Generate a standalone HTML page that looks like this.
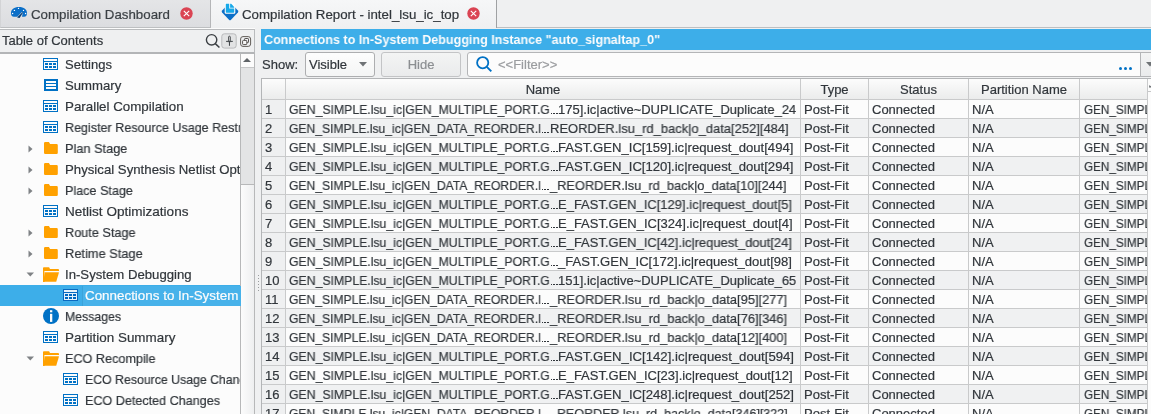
<!DOCTYPE html>
<html><head><meta charset="utf-8">
<style>
html,body{margin:0;padding:0;}
body{width:1151px;height:414px;overflow:hidden;position:relative;background:#eff0f1;font-family:"Liberation Sans",sans-serif;font-size:13px;color:#31363b;}
.a{position:absolute;}
.t{position:absolute;white-space:nowrap;line-height:15px;will-change:transform;-webkit-text-stroke-width:0.2px;}
</style></head><body>

<div class="a" style="left:0;top:0;width:1151px;height:27px;background:#eff0f1;border-bottom:1px solid #bdbfc1"></div>
<div class="a" style="left:0;top:0;width:209px;height:27px;background:linear-gradient(#e4e5e7,#dcdde0);border-left:1px solid #d3d4d6;border-right:1px solid #b5b6b8;border-bottom:1px solid #bdbfc1"></div>
<div class="a" style="left:211px;top:0;width:285px;height:28px;background:linear-gradient(#f6f7f8,#eff0f1);border-right:1px solid #9fa1a3"></div>
<svg class="a" style="left:9px;top:5px" width="20" height="14" viewBox="9 5 20 14">
<path d="M11 13.6 C10.6 9.2 14.2 6.9 19 6.9 C23.8 6.9 27.4 9.2 27 13.6 Q26.7 16.8 24.2 16.8 L22 16.8 L22.8 12.6 L21.6 12.2 L17.3 16.8 L13.8 16.8 Q11.3 16.8 11 13.6 Z" fill="#0b6fc8"/>
<path d="M17.1 17.4 L22.3 12.3 L22.9 12.7 L19.6 17.9 Z" fill="#063d75"/>
<circle cx="12.6" cy="13.5" r="0.7" fill="#fff"/><circle cx="14.4" cy="10.4" r="0.7" fill="#fff"/>
<circle cx="18.5" cy="8.4" r="0.7" fill="#fff"/><circle cx="23.5" cy="10.4" r="0.7" fill="#fff"/><circle cx="25.6" cy="13.5" r="0.7" fill="#fff"/>
</svg>
<div class="t" style="left:31.3px;top:7px;color:#3b4045;transform:scaleX(1.022);transform-origin:0 0">Compilation Dashboard</div>
<svg class="a" style="left:180.3px;top:7.300000000000001px" width="13" height="13" viewBox="0 0 13 13"><circle cx="6.5" cy="6.5" r="6.2" fill="#da4453"/><path d="M3.8 3.8 L9.2 9.2 M9.2 3.8 L3.8 9.2" stroke="#fff" stroke-width="1.1"/></svg>
<svg class="a" style="left:218px;top:2px" width="24" height="20" viewBox="218 2 24 20">
<path d="M230 20.3 Q229.6 20.3 229.2 19.9 L222.1 12.4 Q221.3 11.5 222.1 10.6 L225 7.6 L235 7.6 L237.9 10.6 Q238.7 11.5 237.9 12.4 L230.8 19.9 Q230.4 20.3 230 20.3 Z" fill="#0b6fc8"/>
<rect x="224.7" y="2.8" width="10.6" height="11" rx="1.2" fill="#fbfbfc"/>
<path d="M225.8 4.2 Q225.8 3.8 226.2 3.8 L229.2 3.8 L229.2 8.6 L234.2 8.6 L234.2 12.1 Q234.2 12.7 233.6 12.7 L226.4 12.7 Q225.8 12.7 225.8 12.1 Z" fill="#17a9e9"/>
<path d="M230.1 3.8 L231.2 3.8 L234.2 6.9 L234.2 7.7 L230.1 7.7 Z" fill="#17a9e9"/>
</svg>
<div class="t" style="left:242px;top:7px;color:#31363b;transform:scaleX(1.022);transform-origin:0 0">Compilation Report - intel_lsu_ic_top</div>
<svg class="a" style="left:467.2px;top:6.5px" width="13" height="13" viewBox="0 0 13 13"><circle cx="6.5" cy="6.5" r="6.2" fill="#da4453"/><path d="M3.8 3.8 L9.2 9.2 M9.2 3.8 L3.8 9.2" stroke="#fff" stroke-width="1.1"/></svg>
<div class="a" style="left:0;top:28px;width:255px;height:1px;background:#fcfcfc"></div>
<div class="a" style="left:0;top:29px;width:254px;height:22px;background:#eff0f1;border-top:1px solid #b9bbbd;border-right:1px solid #b9bbbd;border-bottom:2px solid #b3b5b7"></div>
<div class="t" style="left:2px;top:33px">Table of Contents</div>
<svg class="a" style="left:205px;top:33px" width="16" height="16" viewBox="0 0 16 16"><circle cx="6.6" cy="6.8" r="5.2" fill="none" stroke="#3b3f43" stroke-width="1.4"/><path d="M10.3 10.6 L14.4 14.5" stroke="#3b3f43" stroke-width="1.5"/></svg>
<svg class="a" style="left:220px;top:32px" width="34" height="18" viewBox="220 32 34 18">
<rect x="221.8" y="33.8" width="14.4" height="14.3" rx="2.6" fill="#e2e3e4" stroke="#b9babc" stroke-width="1"/>
<path d="M228.6 40.9 L228.6 36.9 Q228.6 36.2 229.45 36.2 Q230.3 36.2 230.3 36.9 L230.3 40.9" fill="none" stroke="#3b3f43" stroke-width="0.9"/>
<path d="M226.1 41.4 Q229.45 40.6 232.8 41.4 Q229.45 42.2 226.1 41.4 Z" fill="#3b3f43" stroke="#3b3f43" stroke-width="0.6"/>
<path d="M229.45 41.4 L229.45 45.8" stroke="#3b3f43" stroke-width="1"/>
<rect x="240.6" y="36.6" width="10" height="9.8" rx="2.4" fill="none" stroke="#625d59" stroke-width="1"/>
<path d="M244.5 39.9 L244.5 39.2 Q244.5 38.5 245.2 38.5 L247.8 38.5 Q248.5 38.5 248.5 39.2 L248.5 41.9 Q248.5 42.6 247.8 42.6 L247 42.6" fill="none" stroke="#4c4846" stroke-width="0.95"/>
<rect x="242.6" y="40.4" width="4.2" height="4.2" rx="0.8" fill="#f8f8f8" stroke="#4c4846" stroke-width="0.95"/>
</svg>
<div class="a" style="left:0;top:54px;width:240px;height:360px;background:#fcfcfc"></div>
<div class="a" style="left:240px;top:54px;width:13px;height:360px;background:#e3e4e5;border-left:1px solid #b7b8b9;border-right:1px solid #b7b8b9"></div>
<div class="a" style="left:241px;top:54px;width:13px;height:13px;background:#fcfcfc;border-bottom:1px solid #c6c7c8"></div>
<svg class="a" style="left:242px;top:57px" width="10" height="6" viewBox="0 0 10 6"><path d="M1 5 L5 1 L9 5 Z" fill="#606468"/></svg>
<div class="a" style="left:241px;top:184px;width:13px;height:230px;background:linear-gradient(90deg,#fcfcfc,#eeeff0);border-top:1px solid #b7b8b9"></div>
<div class="a" style="left:258px;top:275px;width:1px;height:1px;background:#9a9c9e"></div>
<div class="a" style="left:258px;top:278px;width:1px;height:1px;background:#9a9c9e"></div>
<div class="a" style="left:258px;top:281px;width:1px;height:1px;background:#9a9c9e"></div>
<div class="a" style="left:258px;top:284px;width:1px;height:1px;background:#9a9c9e"></div>
<div class="a" style="left:258px;top:287px;width:1px;height:1px;background:#9a9c9e"></div>
<div class="a" style="left:258px;top:290px;width:1px;height:1px;background:#9a9c9e"></div>
<svg style="position:absolute;left:43px;top:58px" width="15" height="12" viewBox="0 0 15 12"><rect x="0.5" y="0.5" width="14" height="11" fill="none" stroke="#0071c5" stroke-width="1"/><rect x="1" y="3" width="13" height="1" fill="#0071c5"/><rect x="2" y="5" width="3" height="2" fill="#0071c5"/><rect x="6" y="5" width="3" height="2" fill="#0071c5"/><rect x="10" y="5" width="3" height="2" fill="#0071c5"/><rect x="2" y="8" width="3" height="2" fill="#0071c5"/><rect x="6" y="8" width="3" height="2" fill="#0071c5"/><rect x="10" y="8" width="3" height="2" fill="#0071c5"/></svg>
<div class="a" style="left:65px;top:54px;width:175px;height:21px;overflow:hidden"><div class="t" style="left:0;top:3px;color:#31363b;transform:scaleX(1.0);transform-origin:0 0">Settings</div></div>
<svg style="position:absolute;left:44px;top:79px" width="14" height="12" viewBox="0 0 14 12"><rect x="0" y="0" width="14" height="12" fill="#0071c5"/><rect x="2" y="2" width="10" height="2" fill="#fcfcfc"/><rect x="2" y="5" width="10" height="2" fill="#fcfcfc"/><rect x="2" y="8" width="10" height="2" fill="#fcfcfc"/></svg>
<div class="a" style="left:65px;top:75px;width:175px;height:21px;overflow:hidden"><div class="t" style="left:0;top:3px;color:#31363b;transform:scaleX(1.011);transform-origin:0 0">Summary</div></div>
<svg style="position:absolute;left:43px;top:100px" width="15" height="12" viewBox="0 0 15 12"><rect x="0.5" y="0.5" width="14" height="11" fill="none" stroke="#0071c5" stroke-width="1"/><rect x="1" y="3" width="13" height="1" fill="#0071c5"/><rect x="2" y="5" width="3" height="2" fill="#0071c5"/><rect x="6" y="5" width="3" height="2" fill="#0071c5"/><rect x="10" y="5" width="3" height="2" fill="#0071c5"/><rect x="2" y="8" width="3" height="2" fill="#0071c5"/><rect x="6" y="8" width="3" height="2" fill="#0071c5"/><rect x="10" y="8" width="3" height="2" fill="#0071c5"/></svg>
<div class="a" style="left:65px;top:96px;width:175px;height:21px;overflow:hidden"><div class="t" style="left:0;top:3px;color:#31363b;transform:scaleX(1.026);transform-origin:0 0">Parallel Compilation</div></div>
<svg style="position:absolute;left:43px;top:121px" width="15" height="12" viewBox="0 0 15 12"><rect x="0.5" y="0.5" width="14" height="11" fill="none" stroke="#0071c5" stroke-width="1"/><rect x="1" y="3" width="13" height="1" fill="#0071c5"/><rect x="2" y="5" width="3" height="2" fill="#0071c5"/><rect x="6" y="5" width="3" height="2" fill="#0071c5"/><rect x="10" y="5" width="3" height="2" fill="#0071c5"/><rect x="2" y="8" width="3" height="2" fill="#0071c5"/><rect x="6" y="8" width="3" height="2" fill="#0071c5"/><rect x="10" y="8" width="3" height="2" fill="#0071c5"/></svg>
<div class="a" style="left:65px;top:117px;width:175px;height:21px;overflow:hidden"><div class="t" style="left:0;top:3px;color:#31363b;transform:scaleX(0.965);transform-origin:0 0">Register Resource Usage Restrictions</div></div>
<svg style="position:absolute;left:28px;top:145px" width="6" height="8" viewBox="0 0 6 8"><path d="M0.5 0.5 L4.5 4 L0.5 7.5 Z" fill="#7f8285"/></svg>
<svg style="position:absolute;left:43px;top:142px" width="16" height="13" viewBox="0 0 16 13"><path d="M1 1.3 Q1 0 2.3 0 L5.9 0 L7.1 2.1 L13.6 2.1 Q14.8 2.1 14.8 3.3 L14.8 10.8 Q14.8 12 13.6 12 L2.2 12 Q1 12 1 10.8 Z" fill="#ffa100"/></svg>
<div class="a" style="left:65px;top:138px;width:175px;height:21px;overflow:hidden"><div class="t" style="left:0;top:3px;color:#31363b;transform:scaleX(0.98);transform-origin:0 0">Plan Stage</div></div>
<svg style="position:absolute;left:28px;top:166px" width="6" height="8" viewBox="0 0 6 8"><path d="M0.5 0.5 L4.5 4 L0.5 7.5 Z" fill="#7f8285"/></svg>
<svg style="position:absolute;left:43px;top:163px" width="16" height="13" viewBox="0 0 16 13"><path d="M1 1.3 Q1 0 2.3 0 L5.9 0 L7.1 2.1 L13.6 2.1 Q14.8 2.1 14.8 3.3 L14.8 10.8 Q14.8 12 13.6 12 L2.2 12 Q1 12 1 10.8 Z" fill="#ffa100"/></svg>
<div class="a" style="left:65px;top:159px;width:175px;height:21px;overflow:hidden"><div class="t" style="left:0;top:3px;color:#31363b;transform:scaleX(1.016);transform-origin:0 0">Physical Synthesis Netlist Optimizations</div></div>
<svg style="position:absolute;left:28px;top:187px" width="6" height="8" viewBox="0 0 6 8"><path d="M0.5 0.5 L4.5 4 L0.5 7.5 Z" fill="#7f8285"/></svg>
<svg style="position:absolute;left:43px;top:184px" width="16" height="13" viewBox="0 0 16 13"><path d="M1 1.3 Q1 0 2.3 0 L5.9 0 L7.1 2.1 L13.6 2.1 Q14.8 2.1 14.8 3.3 L14.8 10.8 Q14.8 12 13.6 12 L2.2 12 Q1 12 1 10.8 Z" fill="#ffa100"/></svg>
<div class="a" style="left:65px;top:180px;width:175px;height:21px;overflow:hidden"><div class="t" style="left:0;top:3px;color:#31363b;transform:scaleX(0.969);transform-origin:0 0">Place Stage</div></div>
<svg style="position:absolute;left:43px;top:205px" width="15" height="12" viewBox="0 0 15 12"><rect x="0.5" y="0.5" width="14" height="11" fill="none" stroke="#0071c5" stroke-width="1"/><rect x="1" y="3" width="13" height="1" fill="#0071c5"/><rect x="2" y="5" width="3" height="2" fill="#0071c5"/><rect x="6" y="5" width="3" height="2" fill="#0071c5"/><rect x="10" y="5" width="3" height="2" fill="#0071c5"/><rect x="2" y="8" width="3" height="2" fill="#0071c5"/><rect x="6" y="8" width="3" height="2" fill="#0071c5"/><rect x="10" y="8" width="3" height="2" fill="#0071c5"/></svg>
<div class="a" style="left:65px;top:201px;width:175px;height:21px;overflow:hidden"><div class="t" style="left:0;top:3px;color:#31363b;transform:scaleX(1.042);transform-origin:0 0">Netlist Optimizations</div></div>
<svg style="position:absolute;left:28px;top:229px" width="6" height="8" viewBox="0 0 6 8"><path d="M0.5 0.5 L4.5 4 L0.5 7.5 Z" fill="#7f8285"/></svg>
<svg style="position:absolute;left:43px;top:226px" width="16" height="13" viewBox="0 0 16 13"><path d="M1 1.3 Q1 0 2.3 0 L5.9 0 L7.1 2.1 L13.6 2.1 Q14.8 2.1 14.8 3.3 L14.8 10.8 Q14.8 12 13.6 12 L2.2 12 Q1 12 1 10.8 Z" fill="#ffa100"/></svg>
<div class="a" style="left:65px;top:222px;width:175px;height:21px;overflow:hidden"><div class="t" style="left:0;top:3px;color:#31363b;transform:scaleX(0.977);transform-origin:0 0">Route Stage</div></div>
<svg style="position:absolute;left:28px;top:250px" width="6" height="8" viewBox="0 0 6 8"><path d="M0.5 0.5 L4.5 4 L0.5 7.5 Z" fill="#7f8285"/></svg>
<svg style="position:absolute;left:43px;top:247px" width="16" height="13" viewBox="0 0 16 13"><path d="M1 1.3 Q1 0 2.3 0 L5.9 0 L7.1 2.1 L13.6 2.1 Q14.8 2.1 14.8 3.3 L14.8 10.8 Q14.8 12 13.6 12 L2.2 12 Q1 12 1 10.8 Z" fill="#ffa100"/></svg>
<div class="a" style="left:65px;top:243px;width:175px;height:21px;overflow:hidden"><div class="t" style="left:0;top:3px;color:#31363b;transform:scaleX(0.988);transform-origin:0 0">Retime Stage</div></div>
<svg style="position:absolute;left:26px;top:272px" width="9" height="6" viewBox="0 0 9 6"><path d="M0.5 0.5 L8 0.5 L4.25 4.5 Z" fill="#7f8285"/></svg>
<svg style="position:absolute;left:43px;top:267px" width="17" height="16" viewBox="0 0 17 16"><path d="M0 1.1 Q0 0.2 0.9 0.2 L6.1 0.2 L7 2 L15 2 Q16 2 16 3 L16 4 L1.6 4 L1.6 15 L0 15 Z" fill="#ffa100"/><rect x="1.6" y="4" width="14.4" height="1.1" fill="#fcfcfc"/><path d="M2.1 5.2 L15.5 5.2 Q16 5.2 15.9 5.7 L13.2 14.8 L0.4 14.8 Q0 14.8 0.1 14.3 Z" fill="#ffa100"/></svg>
<div class="a" style="left:65px;top:264px;width:175px;height:21px;overflow:hidden"><div class="t" style="left:0;top:3px;color:#31363b;transform:scaleX(1.013);transform-origin:0 0">In-System Debugging</div></div>
<div class="a" style="left:0;top:285px;width:240px;height:21px;background:#3daee9"></div>
<div class="a" style="left:82px;top:286px;width:158px;height:20px;background:#47b2ea;border-left:1px solid #3aa3da"></div>
<svg style="position:absolute;left:63px;top:289px" width="15" height="12" viewBox="0 0 15 12"><rect x="0" y="0" width="15" height="12" fill="#0a6ac0"/><rect x="1" y="1" width="13" height="10" fill="#e6f3fb"/><rect x="1" y="3" width="13" height="1" fill="#0a6ac0"/><rect x="2" y="5" width="3" height="2" fill="#0068c0"/><rect x="6" y="5" width="3" height="2" fill="#0068c0"/><rect x="10" y="5" width="3" height="2" fill="#0068c0"/><rect x="2" y="8" width="3" height="2" fill="#0068c0"/><rect x="6" y="8" width="3" height="2" fill="#0068c0"/><rect x="10" y="8" width="3" height="2" fill="#0068c0"/></svg>
<div class="a" style="left:85px;top:285px;width:155px;height:21px;overflow:hidden"><div class="t" style="left:0;top:3px;color:#fcfcfc;transform:scaleX(1.03);transform-origin:0 0">Connections to In-System Debugging Instance</div></div>
<svg style="position:absolute;left:43px;top:308px" width="16" height="16" viewBox="0 0 16 16"><circle cx="8" cy="8" r="8" fill="#0071c5"/><rect x="7" y="2.2" width="2.3" height="2.1" fill="#fcfcfc"/><rect x="7" y="5.8" width="2.3" height="8.1" fill="#fcfcfc"/></svg>
<div class="a" style="left:65px;top:306px;width:175px;height:21px;overflow:hidden"><div class="t" style="left:0;top:3px;color:#31363b;transform:scaleX(0.946);transform-origin:0 0">Messages</div></div>
<svg style="position:absolute;left:43px;top:331px" width="15" height="12" viewBox="0 0 15 12"><rect x="0.5" y="0.5" width="14" height="11" fill="none" stroke="#0071c5" stroke-width="1"/><rect x="1" y="3" width="13" height="1" fill="#0071c5"/><rect x="2" y="5" width="3" height="2" fill="#0071c5"/><rect x="6" y="5" width="3" height="2" fill="#0071c5"/><rect x="10" y="5" width="3" height="2" fill="#0071c5"/><rect x="2" y="8" width="3" height="2" fill="#0071c5"/><rect x="6" y="8" width="3" height="2" fill="#0071c5"/><rect x="10" y="8" width="3" height="2" fill="#0071c5"/></svg>
<div class="a" style="left:65px;top:327px;width:175px;height:21px;overflow:hidden"><div class="t" style="left:0;top:3px;color:#31363b;transform:scaleX(1.032);transform-origin:0 0">Partition Summary</div></div>
<svg style="position:absolute;left:26px;top:356px" width="9" height="6" viewBox="0 0 9 6"><path d="M0.5 0.5 L8 0.5 L4.25 4.5 Z" fill="#7f8285"/></svg>
<svg style="position:absolute;left:43px;top:351px" width="17" height="16" viewBox="0 0 17 16"><path d="M0 1.1 Q0 0.2 0.9 0.2 L6.1 0.2 L7 2 L15 2 Q16 2 16 3 L16 4 L1.6 4 L1.6 15 L0 15 Z" fill="#ffa100"/><rect x="1.6" y="4" width="14.4" height="1.1" fill="#fcfcfc"/><path d="M2.1 5.2 L15.5 5.2 Q16 5.2 15.9 5.7 L13.2 14.8 L0.4 14.8 Q0 14.8 0.1 14.3 Z" fill="#ffa100"/></svg>
<div class="a" style="left:65px;top:348px;width:175px;height:21px;overflow:hidden"><div class="t" style="left:0;top:3px;color:#31363b;transform:scaleX(0.971);transform-origin:0 0">ECO Recompile</div></div>
<svg style="position:absolute;left:63px;top:373px" width="15" height="12" viewBox="0 0 15 12"><rect x="0.5" y="0.5" width="14" height="11" fill="none" stroke="#0071c5" stroke-width="1"/><rect x="1" y="3" width="13" height="1" fill="#0071c5"/><rect x="2" y="5" width="3" height="2" fill="#0071c5"/><rect x="6" y="5" width="3" height="2" fill="#0071c5"/><rect x="10" y="5" width="3" height="2" fill="#0071c5"/><rect x="2" y="8" width="3" height="2" fill="#0071c5"/><rect x="6" y="8" width="3" height="2" fill="#0071c5"/><rect x="10" y="8" width="3" height="2" fill="#0071c5"/></svg>
<div class="a" style="left:85px;top:369px;width:155px;height:21px;overflow:hidden"><div class="t" style="left:0;top:3px;color:#31363b;transform:scaleX(0.946);transform-origin:0 0">ECO Resource Usage Changes</div></div>
<svg style="position:absolute;left:63px;top:394px" width="15" height="12" viewBox="0 0 15 12"><rect x="0.5" y="0.5" width="14" height="11" fill="none" stroke="#0071c5" stroke-width="1"/><rect x="1" y="3" width="13" height="1" fill="#0071c5"/><rect x="2" y="5" width="3" height="2" fill="#0071c5"/><rect x="6" y="5" width="3" height="2" fill="#0071c5"/><rect x="10" y="5" width="3" height="2" fill="#0071c5"/><rect x="2" y="8" width="3" height="2" fill="#0071c5"/><rect x="6" y="8" width="3" height="2" fill="#0071c5"/><rect x="10" y="8" width="3" height="2" fill="#0071c5"/></svg>
<div class="a" style="left:85px;top:390px;width:155px;height:21px;overflow:hidden"><div class="t" style="left:0;top:3px;color:#31363b;transform:scaleX(0.968);transform-origin:0 0">ECO Detected Changes</div></div>
<div class="a" style="left:261px;top:29px;width:890px;height:21px;background:#3daee9"></div>
<div class="t" style="left:263.5px;top:32px;color:#fcfcfc;font-weight:bold;-webkit-text-stroke-width:0;transform:scaleX(0.965);transform-origin:0 0">Connections to In-System Debugging Instance "auto_signaltap_0"</div>
<div class="t" style="left:262px;top:57px">Show:</div>
<div class="a" style="left:304.5px;top:52px;width:68.5px;height:23px;border:1px solid #adaeb0;border-radius:3px;background:linear-gradient(#fdfdfd,#f4f5f5)"></div>
<div class="t" style="left:309px;top:57px">Visible</div>
<svg class="a" style="left:359px;top:62px" width="8" height="5" viewBox="0 0 8 5"><path d="M0 0 L8 0 L4 4.5 Z" fill="#6f7376"/></svg>
<div class="a" style="left:381px;top:52px;width:78px;height:23px;border:1px solid #c3c4c6;border-radius:3px;background:linear-gradient(#f3f4f4,#eaebec)"></div>
<div class="t" style="left:381px;top:57px;width:80px;text-align:center;color:#8c8f92">Hide</div>
<div class="a" style="left:467px;top:52px;width:700px;height:23px;border:1px solid #b4b5b7;border-radius:3px 0 0 3px;background:#fcfcfc"></div>
<div class="a" style="left:1140px;top:53px;width:1px;height:23px;background:#b4b5b7"></div>
<div class="a" style="left:1141px;top:53px;width:10px;height:23px;background:linear-gradient(#f3f4f4,#eaebec)"></div>
<svg class="a" style="left:1146px;top:62px" width="8" height="5" viewBox="0 0 8 5"><path d="M0 0 L8 0 L4 4.5 Z" fill="#6f7376"/></svg>
<svg class="a" style="left:475px;top:55px" width="19" height="19" viewBox="0 0 19 19"><circle cx="7.7" cy="7.7" r="5.6" fill="none" stroke="#0071c5" stroke-width="1.8"/><path d="M11.8 11.8 L16.3 16.4" stroke="#0071c5" stroke-width="1.9"/></svg>
<div class="t" style="left:498px;top:57px;color:#9a9c9f">&lt;&lt;Filter&gt;&gt;</div>
<div class="a" style="left:1119px;top:67px;width:3px;height:3px;border-radius:50%;background:#0071c5"></div>
<div class="a" style="left:1124px;top:67px;width:3px;height:3px;border-radius:50%;background:#0071c5"></div>
<div class="a" style="left:1129px;top:67px;width:3px;height:3px;border-radius:50%;background:#0071c5"></div>
<div class="a" style="left:261px;top:78px;width:890px;height:336px;background:#fcfcfc;border-top:1px solid #b3b5b7;border-left:1px solid #b3b5b7"></div>
<div class="a" style="left:262px;top:79px;width:885px;height:20px;background:linear-gradient(#fcfcfc,#ebecec)"></div>
<div class="a" style="left:262px;top:99px;width:885px;height:1px;background:#c9cacb"></div>
<div class="a" style="left:285px;top:79px;width:1px;height:335px;background:#c9cacb"></div>
<div class="a" style="left:800px;top:79px;width:1px;height:335px;background:#c9cacb"></div>
<div class="a" style="left:868px;top:79px;width:1px;height:335px;background:#c9cacb"></div>
<div class="a" style="left:968px;top:79px;width:1px;height:335px;background:#c9cacb"></div>
<div class="a" style="left:1079px;top:79px;width:1px;height:335px;background:#c9cacb"></div>
<div class="a" style="left:1147px;top:79px;width:1px;height:335px;background:#c9cacb"></div>
<div class="t" style="left:286px;top:82px;width:514px;text-align:center">Name</div>
<div class="t" style="left:801px;top:82px;width:67px;text-align:center">Type</div>
<div class="t" style="left:869px;top:82px;width:99px;text-align:center">Status</div>
<div class="t" style="left:969px;top:82px;width:110px;text-align:center">Partition Name</div>
<div class="a" style="left:286px;top:100px;width:861px;height:18px;background:#fcfcfc"></div>
<div class="a" style="left:262px;top:100px;width:23px;height:18px;background:#eff0f1"></div>
<div class="a" style="left:262px;top:118px;width:885px;height:1px;background:#c9cacb"></div>
<div class="t" style="left:265px;top:102px">1</div>
<div class="t" style="left:288.7px;top:102px;transform:scaleX(0.9425);transform-origin:0 0">GEN_SIMPLE.lsu_ic|GEN_MULTIPLE_PORT.G</div>
<div class="a" style="left:550.80px;top:112.5px;width:1.5px;height:1.6px;background:#31363b"></div>
<div class="a" style="left:553.40px;top:112.5px;width:1.5px;height:1.6px;background:#31363b"></div>
<div class="a" style="left:556.00px;top:112.5px;width:1.5px;height:1.6px;background:#31363b"></div>
<div class="t" style="left:558.3px;top:102px;transform:scaleX(0.9994);transform-origin:0 0">175].ic|active~DUPLICATE_Duplicate_24</div>
<div class="t" style="left:804px;top:102px">Post-Fit</div>
<div class="t" style="left:872px;top:102px">Connected</div>
<div class="t" style="left:972px;top:102px">N/A</div>
<div class="a" style="left:1080px;top:100px;width:67px;height:18px;overflow:hidden"><div class="t" style="left:4px;top:2px;transform:scaleX(0.9);transform-origin:0 0">GEN_SIMPLE</div></div>
<div class="a" style="left:286px;top:119px;width:861px;height:18px;background:#f0f1f2"></div>
<div class="a" style="left:262px;top:119px;width:23px;height:18px;background:#eff0f1"></div>
<div class="a" style="left:262px;top:137px;width:885px;height:1px;background:#c9cacb"></div>
<div class="t" style="left:265px;top:121px">2</div>
<div class="t" style="left:288.7px;top:121px;transform:scaleX(0.9319);transform-origin:0 0">GEN_SIMPLE.lsu_ic|GEN_DATA_REORDER.l</div>
<div class="a" style="left:541.80px;top:131.5px;width:1.5px;height:1.6px;background:#31363b"></div>
<div class="a" style="left:544.40px;top:131.5px;width:1.5px;height:1.6px;background:#31363b"></div>
<div class="a" style="left:547.00px;top:131.5px;width:1.5px;height:1.6px;background:#31363b"></div>
<div class="t" style="left:550.3px;top:121px;transform:scaleX(0.9959);transform-origin:0 0">REORDER.lsu_rd_back|o_data[252][484]</div>
<div class="t" style="left:804px;top:121px">Post-Fit</div>
<div class="t" style="left:872px;top:121px">Connected</div>
<div class="t" style="left:972px;top:121px">N/A</div>
<div class="a" style="left:1080px;top:119px;width:67px;height:18px;overflow:hidden"><div class="t" style="left:4px;top:2px;transform:scaleX(0.9);transform-origin:0 0">GEN_SIMPLE</div></div>
<div class="a" style="left:286px;top:138px;width:861px;height:18px;background:#fcfcfc"></div>
<div class="a" style="left:262px;top:138px;width:23px;height:18px;background:#eff0f1"></div>
<div class="a" style="left:262px;top:156px;width:885px;height:1px;background:#c9cacb"></div>
<div class="t" style="left:265px;top:140px">3</div>
<div class="t" style="left:288.7px;top:140px;transform:scaleX(0.9425);transform-origin:0 0">GEN_SIMPLE.lsu_ic|GEN_MULTIPLE_PORT.G</div>
<div class="a" style="left:550.80px;top:150.5px;width:1.5px;height:1.6px;background:#31363b"></div>
<div class="a" style="left:553.40px;top:150.5px;width:1.5px;height:1.6px;background:#31363b"></div>
<div class="a" style="left:556.00px;top:150.5px;width:1.5px;height:1.6px;background:#31363b"></div>
<div class="t" style="left:558.3px;top:140px;transform:scaleX(1.0095);transform-origin:0 0">FAST.GEN_IC[159].ic|request_dout[494]</div>
<div class="t" style="left:804px;top:140px">Post-Fit</div>
<div class="t" style="left:872px;top:140px">Connected</div>
<div class="t" style="left:972px;top:140px">N/A</div>
<div class="a" style="left:1080px;top:138px;width:67px;height:18px;overflow:hidden"><div class="t" style="left:4px;top:2px;transform:scaleX(0.9);transform-origin:0 0">GEN_SIMPLE</div></div>
<div class="a" style="left:286px;top:157px;width:861px;height:18px;background:#f0f1f2"></div>
<div class="a" style="left:262px;top:157px;width:23px;height:18px;background:#eff0f1"></div>
<div class="a" style="left:262px;top:175px;width:885px;height:1px;background:#c9cacb"></div>
<div class="t" style="left:265px;top:159px">4</div>
<div class="t" style="left:288.7px;top:159px;transform:scaleX(0.9425);transform-origin:0 0">GEN_SIMPLE.lsu_ic|GEN_MULTIPLE_PORT.G</div>
<div class="a" style="left:550.80px;top:169.5px;width:1.5px;height:1.6px;background:#31363b"></div>
<div class="a" style="left:553.40px;top:169.5px;width:1.5px;height:1.6px;background:#31363b"></div>
<div class="a" style="left:556.00px;top:169.5px;width:1.5px;height:1.6px;background:#31363b"></div>
<div class="t" style="left:558.3px;top:159px;transform:scaleX(1.0095);transform-origin:0 0">FAST.GEN_IC[120].ic|request_dout[294]</div>
<div class="t" style="left:804px;top:159px">Post-Fit</div>
<div class="t" style="left:872px;top:159px">Connected</div>
<div class="t" style="left:972px;top:159px">N/A</div>
<div class="a" style="left:1080px;top:157px;width:67px;height:18px;overflow:hidden"><div class="t" style="left:4px;top:2px;transform:scaleX(0.9);transform-origin:0 0">GEN_SIMPLE</div></div>
<div class="a" style="left:286px;top:176px;width:861px;height:18px;background:#fcfcfc"></div>
<div class="a" style="left:262px;top:176px;width:23px;height:18px;background:#eff0f1"></div>
<div class="a" style="left:262px;top:194px;width:885px;height:1px;background:#c9cacb"></div>
<div class="t" style="left:265px;top:178px">5</div>
<div class="t" style="left:288.7px;top:178px;transform:scaleX(0.9319);transform-origin:0 0">GEN_SIMPLE.lsu_ic|GEN_DATA_REORDER.l</div>
<div class="a" style="left:541.80px;top:188.5px;width:1.5px;height:1.6px;background:#31363b"></div>
<div class="a" style="left:544.40px;top:188.5px;width:1.5px;height:1.6px;background:#31363b"></div>
<div class="a" style="left:547.00px;top:188.5px;width:1.5px;height:1.6px;background:#31363b"></div>
<div class="t" style="left:550.3px;top:178px;transform:scaleX(0.9867);transform-origin:0 0">_REORDER.lsu_rd_back|o_data[10][244]</div>
<div class="t" style="left:804px;top:178px">Post-Fit</div>
<div class="t" style="left:872px;top:178px">Connected</div>
<div class="t" style="left:972px;top:178px">N/A</div>
<div class="a" style="left:1080px;top:176px;width:67px;height:18px;overflow:hidden"><div class="t" style="left:4px;top:2px;transform:scaleX(0.9);transform-origin:0 0">GEN_SIMPLE</div></div>
<div class="a" style="left:286px;top:195px;width:861px;height:18px;background:#f0f1f2"></div>
<div class="a" style="left:262px;top:195px;width:23px;height:18px;background:#eff0f1"></div>
<div class="a" style="left:262px;top:213px;width:885px;height:1px;background:#c9cacb"></div>
<div class="t" style="left:265px;top:197px">6</div>
<div class="t" style="left:288.7px;top:197px;transform:scaleX(0.9425);transform-origin:0 0">GEN_SIMPLE.lsu_ic|GEN_MULTIPLE_PORT.G</div>
<div class="a" style="left:550.80px;top:207.5px;width:1.5px;height:1.6px;background:#31363b"></div>
<div class="a" style="left:553.40px;top:207.5px;width:1.5px;height:1.6px;background:#31363b"></div>
<div class="a" style="left:556.00px;top:207.5px;width:1.5px;height:1.6px;background:#31363b"></div>
<div class="t" style="left:558.3px;top:197px;transform:scaleX(0.9973);transform-origin:0 0">E_FAST.GEN_IC[129].ic|request_dout[5]</div>
<div class="t" style="left:804px;top:197px">Post-Fit</div>
<div class="t" style="left:872px;top:197px">Connected</div>
<div class="t" style="left:972px;top:197px">N/A</div>
<div class="a" style="left:1080px;top:195px;width:67px;height:18px;overflow:hidden"><div class="t" style="left:4px;top:2px;transform:scaleX(0.9);transform-origin:0 0">GEN_SIMPLE</div></div>
<div class="a" style="left:286px;top:214px;width:861px;height:18px;background:#fcfcfc"></div>
<div class="a" style="left:262px;top:214px;width:23px;height:18px;background:#eff0f1"></div>
<div class="a" style="left:262px;top:232px;width:885px;height:1px;background:#c9cacb"></div>
<div class="t" style="left:265px;top:216px">7</div>
<div class="t" style="left:288.7px;top:216px;transform:scaleX(0.9425);transform-origin:0 0">GEN_SIMPLE.lsu_ic|GEN_MULTIPLE_PORT.G</div>
<div class="a" style="left:550.80px;top:226.5px;width:1.5px;height:1.6px;background:#31363b"></div>
<div class="a" style="left:553.40px;top:226.5px;width:1.5px;height:1.6px;background:#31363b"></div>
<div class="a" style="left:556.00px;top:226.5px;width:1.5px;height:1.6px;background:#31363b"></div>
<div class="t" style="left:558.3px;top:216px;transform:scaleX(0.9999);transform-origin:0 0">E_FAST.GEN_IC[324].ic|request_dout[4]</div>
<div class="t" style="left:804px;top:216px">Post-Fit</div>
<div class="t" style="left:872px;top:216px">Connected</div>
<div class="t" style="left:972px;top:216px">N/A</div>
<div class="a" style="left:1080px;top:214px;width:67px;height:18px;overflow:hidden"><div class="t" style="left:4px;top:2px;transform:scaleX(0.9);transform-origin:0 0">GEN_SIMPLE</div></div>
<div class="a" style="left:286px;top:233px;width:861px;height:18px;background:#f0f1f2"></div>
<div class="a" style="left:262px;top:233px;width:23px;height:18px;background:#eff0f1"></div>
<div class="a" style="left:262px;top:251px;width:885px;height:1px;background:#c9cacb"></div>
<div class="t" style="left:265px;top:235px">8</div>
<div class="t" style="left:288.7px;top:235px;transform:scaleX(0.9425);transform-origin:0 0">GEN_SIMPLE.lsu_ic|GEN_MULTIPLE_PORT.G</div>
<div class="a" style="left:550.80px;top:245.5px;width:1.5px;height:1.6px;background:#31363b"></div>
<div class="a" style="left:553.40px;top:245.5px;width:1.5px;height:1.6px;background:#31363b"></div>
<div class="a" style="left:556.00px;top:245.5px;width:1.5px;height:1.6px;background:#31363b"></div>
<div class="t" style="left:558.3px;top:235px;transform:scaleX(0.9973);transform-origin:0 0">E_FAST.GEN_IC[42].ic|request_dout[24]</div>
<div class="t" style="left:804px;top:235px">Post-Fit</div>
<div class="t" style="left:872px;top:235px">Connected</div>
<div class="t" style="left:972px;top:235px">N/A</div>
<div class="a" style="left:1080px;top:233px;width:67px;height:18px;overflow:hidden"><div class="t" style="left:4px;top:2px;transform:scaleX(0.9);transform-origin:0 0">GEN_SIMPLE</div></div>
<div class="a" style="left:286px;top:252px;width:861px;height:18px;background:#fcfcfc"></div>
<div class="a" style="left:262px;top:252px;width:23px;height:18px;background:#eff0f1"></div>
<div class="a" style="left:262px;top:270px;width:885px;height:1px;background:#c9cacb"></div>
<div class="t" style="left:265px;top:254px">9</div>
<div class="t" style="left:288.7px;top:254px;transform:scaleX(0.9425);transform-origin:0 0">GEN_SIMPLE.lsu_ic|GEN_MULTIPLE_PORT.G</div>
<div class="a" style="left:550.80px;top:264.5px;width:1.5px;height:1.6px;background:#31363b"></div>
<div class="a" style="left:553.40px;top:264.5px;width:1.5px;height:1.6px;background:#31363b"></div>
<div class="a" style="left:556.00px;top:264.5px;width:1.5px;height:1.6px;background:#31363b"></div>
<div class="t" style="left:558.3px;top:254px;transform:scaleX(1.0035);transform-origin:0 0">_FAST.GEN_IC[172].ic|request_dout[98]</div>
<div class="t" style="left:804px;top:254px">Post-Fit</div>
<div class="t" style="left:872px;top:254px">Connected</div>
<div class="t" style="left:972px;top:254px">N/A</div>
<div class="a" style="left:1080px;top:252px;width:67px;height:18px;overflow:hidden"><div class="t" style="left:4px;top:2px;transform:scaleX(0.9);transform-origin:0 0">GEN_SIMPLE</div></div>
<div class="a" style="left:286px;top:271px;width:861px;height:18px;background:#f0f1f2"></div>
<div class="a" style="left:262px;top:271px;width:23px;height:18px;background:#eff0f1"></div>
<div class="a" style="left:262px;top:289px;width:885px;height:1px;background:#c9cacb"></div>
<div class="t" style="left:265px;top:273px">10</div>
<div class="t" style="left:288.7px;top:273px;transform:scaleX(0.9425);transform-origin:0 0">GEN_SIMPLE.lsu_ic|GEN_MULTIPLE_PORT.G</div>
<div class="a" style="left:550.80px;top:283.5px;width:1.5px;height:1.6px;background:#31363b"></div>
<div class="a" style="left:553.40px;top:283.5px;width:1.5px;height:1.6px;background:#31363b"></div>
<div class="a" style="left:556.00px;top:283.5px;width:1.5px;height:1.6px;background:#31363b"></div>
<div class="t" style="left:558.3px;top:273px;transform:scaleX(0.9994);transform-origin:0 0">151].ic|active~DUPLICATE_Duplicate_65</div>
<div class="t" style="left:804px;top:273px">Post-Fit</div>
<div class="t" style="left:872px;top:273px">Connected</div>
<div class="t" style="left:972px;top:273px">N/A</div>
<div class="a" style="left:1080px;top:271px;width:67px;height:18px;overflow:hidden"><div class="t" style="left:4px;top:2px;transform:scaleX(0.9);transform-origin:0 0">GEN_SIMPLE</div></div>
<div class="a" style="left:286px;top:290px;width:861px;height:18px;background:#fcfcfc"></div>
<div class="a" style="left:262px;top:290px;width:23px;height:18px;background:#eff0f1"></div>
<div class="a" style="left:262px;top:308px;width:885px;height:1px;background:#c9cacb"></div>
<div class="t" style="left:265px;top:292px">11</div>
<div class="t" style="left:288.7px;top:292px;transform:scaleX(0.9319);transform-origin:0 0">GEN_SIMPLE.lsu_ic|GEN_DATA_REORDER.l</div>
<div class="a" style="left:541.80px;top:302.5px;width:1.5px;height:1.6px;background:#31363b"></div>
<div class="a" style="left:544.40px;top:302.5px;width:1.5px;height:1.6px;background:#31363b"></div>
<div class="a" style="left:547.00px;top:302.5px;width:1.5px;height:1.6px;background:#31363b"></div>
<div class="t" style="left:550.3px;top:292px;transform:scaleX(0.9892);transform-origin:0 0">_REORDER.lsu_rd_back|o_data[95][277]</div>
<div class="t" style="left:804px;top:292px">Post-Fit</div>
<div class="t" style="left:872px;top:292px">Connected</div>
<div class="t" style="left:972px;top:292px">N/A</div>
<div class="a" style="left:1080px;top:290px;width:67px;height:18px;overflow:hidden"><div class="t" style="left:4px;top:2px;transform:scaleX(0.9);transform-origin:0 0">GEN_SIMPLE</div></div>
<div class="a" style="left:286px;top:309px;width:861px;height:18px;background:#f0f1f2"></div>
<div class="a" style="left:262px;top:309px;width:23px;height:18px;background:#eff0f1"></div>
<div class="a" style="left:262px;top:327px;width:885px;height:1px;background:#c9cacb"></div>
<div class="t" style="left:265px;top:311px">12</div>
<div class="t" style="left:288.7px;top:311px;transform:scaleX(0.9319);transform-origin:0 0">GEN_SIMPLE.lsu_ic|GEN_DATA_REORDER.l</div>
<div class="a" style="left:541.80px;top:321.5px;width:1.5px;height:1.6px;background:#31363b"></div>
<div class="a" style="left:544.40px;top:321.5px;width:1.5px;height:1.6px;background:#31363b"></div>
<div class="a" style="left:547.00px;top:321.5px;width:1.5px;height:1.6px;background:#31363b"></div>
<div class="t" style="left:550.3px;top:311px;transform:scaleX(0.9892);transform-origin:0 0">_REORDER.lsu_rd_back|o_data[76][346]</div>
<div class="t" style="left:804px;top:311px">Post-Fit</div>
<div class="t" style="left:872px;top:311px">Connected</div>
<div class="t" style="left:972px;top:311px">N/A</div>
<div class="a" style="left:1080px;top:309px;width:67px;height:18px;overflow:hidden"><div class="t" style="left:4px;top:2px;transform:scaleX(0.9);transform-origin:0 0">GEN_SIMPLE</div></div>
<div class="a" style="left:286px;top:328px;width:861px;height:18px;background:#fcfcfc"></div>
<div class="a" style="left:262px;top:328px;width:23px;height:18px;background:#eff0f1"></div>
<div class="a" style="left:262px;top:346px;width:885px;height:1px;background:#c9cacb"></div>
<div class="t" style="left:265px;top:330px">13</div>
<div class="t" style="left:288.7px;top:330px;transform:scaleX(0.9319);transform-origin:0 0">GEN_SIMPLE.lsu_ic|GEN_DATA_REORDER.l</div>
<div class="a" style="left:541.80px;top:340.5px;width:1.5px;height:1.6px;background:#31363b"></div>
<div class="a" style="left:544.40px;top:340.5px;width:1.5px;height:1.6px;background:#31363b"></div>
<div class="a" style="left:547.00px;top:340.5px;width:1.5px;height:1.6px;background:#31363b"></div>
<div class="t" style="left:550.3px;top:330px;transform:scaleX(0.9892);transform-origin:0 0">_REORDER.lsu_rd_back|o_data[12][400]</div>
<div class="t" style="left:804px;top:330px">Post-Fit</div>
<div class="t" style="left:872px;top:330px">Connected</div>
<div class="t" style="left:972px;top:330px">N/A</div>
<div class="a" style="left:1080px;top:328px;width:67px;height:18px;overflow:hidden"><div class="t" style="left:4px;top:2px;transform:scaleX(0.9);transform-origin:0 0">GEN_SIMPLE</div></div>
<div class="a" style="left:286px;top:347px;width:861px;height:18px;background:#f0f1f2"></div>
<div class="a" style="left:262px;top:347px;width:23px;height:18px;background:#eff0f1"></div>
<div class="a" style="left:262px;top:365px;width:885px;height:1px;background:#c9cacb"></div>
<div class="t" style="left:265px;top:349px">14</div>
<div class="t" style="left:288.7px;top:349px;transform:scaleX(0.9425);transform-origin:0 0">GEN_SIMPLE.lsu_ic|GEN_MULTIPLE_PORT.G</div>
<div class="a" style="left:550.80px;top:359.5px;width:1.5px;height:1.6px;background:#31363b"></div>
<div class="a" style="left:553.40px;top:359.5px;width:1.5px;height:1.6px;background:#31363b"></div>
<div class="a" style="left:556.00px;top:359.5px;width:1.5px;height:1.6px;background:#31363b"></div>
<div class="t" style="left:558.3px;top:349px;transform:scaleX(1.0121);transform-origin:0 0">FAST.GEN_IC[142].ic|request_dout[594]</div>
<div class="t" style="left:804px;top:349px">Post-Fit</div>
<div class="t" style="left:872px;top:349px">Connected</div>
<div class="t" style="left:972px;top:349px">N/A</div>
<div class="a" style="left:1080px;top:347px;width:67px;height:18px;overflow:hidden"><div class="t" style="left:4px;top:2px;transform:scaleX(0.9);transform-origin:0 0">GEN_SIMPLE</div></div>
<div class="a" style="left:286px;top:366px;width:861px;height:18px;background:#fcfcfc"></div>
<div class="a" style="left:262px;top:366px;width:23px;height:18px;background:#eff0f1"></div>
<div class="a" style="left:262px;top:384px;width:885px;height:1px;background:#c9cacb"></div>
<div class="t" style="left:265px;top:368px">15</div>
<div class="t" style="left:288.7px;top:368px;transform:scaleX(0.9425);transform-origin:0 0">GEN_SIMPLE.lsu_ic|GEN_MULTIPLE_PORT.G</div>
<div class="a" style="left:550.80px;top:378.5px;width:1.5px;height:1.6px;background:#31363b"></div>
<div class="a" style="left:553.40px;top:378.5px;width:1.5px;height:1.6px;background:#31363b"></div>
<div class="a" style="left:556.00px;top:378.5px;width:1.5px;height:1.6px;background:#31363b"></div>
<div class="t" style="left:558.3px;top:368px;transform:scaleX(0.9986);transform-origin:0 0">E_FAST.GEN_IC[23].ic|request_dout[12]</div>
<div class="t" style="left:804px;top:368px">Post-Fit</div>
<div class="t" style="left:872px;top:368px">Connected</div>
<div class="t" style="left:972px;top:368px">N/A</div>
<div class="a" style="left:1080px;top:366px;width:67px;height:18px;overflow:hidden"><div class="t" style="left:4px;top:2px;transform:scaleX(0.9);transform-origin:0 0">GEN_SIMPLE</div></div>
<div class="a" style="left:286px;top:385px;width:861px;height:18px;background:#f0f1f2"></div>
<div class="a" style="left:262px;top:385px;width:23px;height:18px;background:#eff0f1"></div>
<div class="a" style="left:262px;top:403px;width:885px;height:1px;background:#c9cacb"></div>
<div class="t" style="left:265px;top:387px">16</div>
<div class="t" style="left:288.7px;top:387px;transform:scaleX(0.9425);transform-origin:0 0">GEN_SIMPLE.lsu_ic|GEN_MULTIPLE_PORT.G</div>
<div class="a" style="left:550.80px;top:397.5px;width:1.5px;height:1.6px;background:#31363b"></div>
<div class="a" style="left:553.40px;top:397.5px;width:1.5px;height:1.6px;background:#31363b"></div>
<div class="a" style="left:556.00px;top:397.5px;width:1.5px;height:1.6px;background:#31363b"></div>
<div class="t" style="left:558.3px;top:387px;transform:scaleX(1.0121);transform-origin:0 0">FAST.GEN_IC[248].ic|request_dout[252]</div>
<div class="t" style="left:804px;top:387px">Post-Fit</div>
<div class="t" style="left:872px;top:387px">Connected</div>
<div class="t" style="left:972px;top:387px">N/A</div>
<div class="a" style="left:1080px;top:385px;width:67px;height:18px;overflow:hidden"><div class="t" style="left:4px;top:2px;transform:scaleX(0.9);transform-origin:0 0">GEN_SIMPLE</div></div>
<div class="a" style="left:286px;top:404px;width:861px;height:18px;background:#fcfcfc"></div>
<div class="a" style="left:262px;top:404px;width:23px;height:18px;background:#eff0f1"></div>
<div class="a" style="left:262px;top:422px;width:885px;height:1px;background:#c9cacb"></div>
<div class="t" style="left:265px;top:406px">17</div>
<div class="t" style="left:288.7px;top:406px;transform:scaleX(0.9319);transform-origin:0 0">GEN_SIMPLE.lsu_ic|GEN_DATA_REORDER.l</div>
<div class="a" style="left:541.80px;top:416.5px;width:1.5px;height:1.6px;background:#31363b"></div>
<div class="a" style="left:544.40px;top:416.5px;width:1.5px;height:1.6px;background:#31363b"></div>
<div class="a" style="left:547.00px;top:416.5px;width:1.5px;height:1.6px;background:#31363b"></div>
<div class="t" style="left:550.3px;top:406px;transform:scaleX(0.9627);transform-origin:0 0">_REORDER.lsu_rd_back|o_data[346][322]</div>
<div class="t" style="left:804px;top:406px">Post-Fit</div>
<div class="t" style="left:872px;top:406px">Connected</div>
<div class="t" style="left:972px;top:406px">N/A</div>
<div class="a" style="left:1080px;top:404px;width:67px;height:18px;overflow:hidden"><div class="t" style="left:4px;top:2px;transform:scaleX(0.9);transform-origin:0 0">GEN_SIMPLE</div></div>
<div class="a" style="left:285px;top:79px;width:1px;height:335px;background:#c9cacb"></div>
<div class="a" style="left:800px;top:79px;width:1px;height:335px;background:#c9cacb"></div>
<div class="a" style="left:868px;top:79px;width:1px;height:335px;background:#c9cacb"></div>
<div class="a" style="left:968px;top:79px;width:1px;height:335px;background:#c9cacb"></div>
<div class="a" style="left:1079px;top:79px;width:1px;height:335px;background:#c9cacb"></div>
<div class="a" style="left:1147px;top:79px;width:1px;height:335px;background:#c9cacb"></div>
<div class="a" style="left:1148px;top:79px;width:3px;height:335px;background:#fcfcfc"></div>
<div class="a" style="left:1148px;top:91px;width:3px;height:1px;background:#c6c7c8"></div>
<svg class="a" style="left:1148px;top:83px" width="3" height="6" viewBox="0 0 3 6"><path d="M1.5 2 L4 4.5 L1 4.5 Z" fill="#606468"/></svg>
</body></html>
